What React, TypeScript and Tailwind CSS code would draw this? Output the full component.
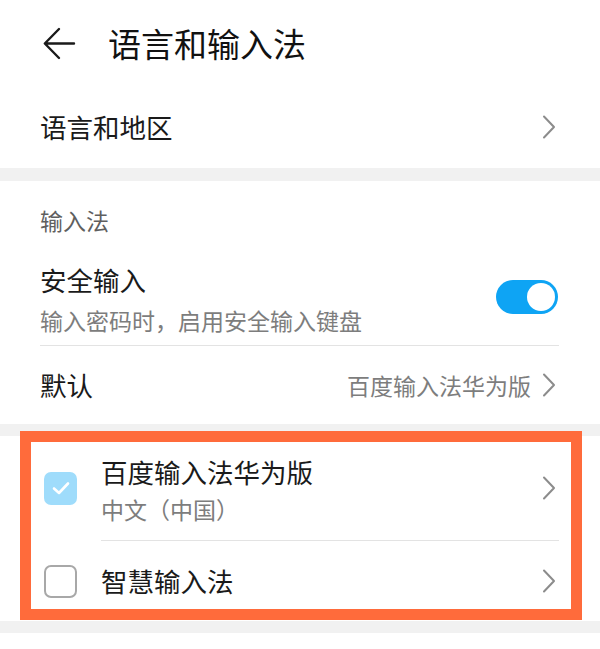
import React from "react";

const Chevron = () => (
  <svg width="14" height="24" viewBox="0 0 14 24" fill="none" className="shrink-0">
    <path d="M2 1.5 L12 12 L2 22.5" stroke="#8c8c8c" strokeWidth="2" strokeLinecap="round" strokeLinejoin="round" />
  </svg>
);

export default function App() {
  const font = { fontFamily: '"Noto Sans CJK SC", "Noto Sans", sans-serif' };
  return (
    <div className="relative w-[600px] h-[649px] bg-white overflow-hidden" style={font}>
      {/* Header */}
      <div className="h-[86px] flex items-center pl-[43px]">
        <svg width="33" height="33" viewBox="0 0 33 33" fill="none" className="shrink-0">
          <path d="M31 16.5 H2.5 M16 2 L1.8 16.5 L16 31" stroke="#1a1a1a" strokeWidth="2.4" strokeLinecap="round" strokeLinejoin="round" />
        </svg>
        <div className="ml-[32px] text-[33px] leading-[40px] font-normal text-[#111111]">语言和输入法</div>
      </div>

      {/* 语言和地区 */}
      <div className="h-[82px] flex items-center justify-between pl-[40px] pr-[44px]">
        <div className="text-[26.5px] leading-[34px] text-[#1a1a1a]">语言和地区</div>
        <Chevron />
      </div>

      <div className="h-[13px] bg-[#f1f1f1]" />

      {/* 输入法 section */}
      <div className="h-[78px] flex items-center pl-[40px]">
        <div className="text-[23px] leading-[30px] text-[#5f5f5f]">输入法</div>
      </div>

      <div className="h-[86px] flex items-start justify-between pl-[40px] pr-[42px]">
        <div className="pt-[4px] flex flex-col">
          <div className="text-[26.5px] leading-[34px] text-[#1a1a1a]">安全输入</div>
          <div className="mt-[8px] text-[23px] leading-[30px] text-[#7d7d7d]">输入密码时，启用安全输入键盘</div>
        </div>
        <div className="mt-[21px] w-[62px] h-[34px] rounded-full bg-[#0ea4f4] flex items-center justify-end pr-[3px]">
          <div className="w-[28px] h-[28px] rounded-full bg-white" />
        </div>
      </div>

      <div className="h-px bg-[#e3e3e3] ml-[40px] mr-[41px]" />

      <div className="h-[78px] flex items-center justify-between pl-[40px] pr-[44px]">
        <div className="text-[26.5px] leading-[34px] text-[#1a1a1a]">默认</div>
        <div className="flex items-center gap-[11px]">
          <div className="text-[23px] leading-[30px] text-[#7d7d7d]">百度输入法华为版</div>
          <Chevron />
        </div>
      </div>

      <div className="h-[12px] bg-[#f1f1f1]" />

      {/* Input method list */}
      <div className="h-[104px] flex items-center pl-[44px] pr-[44px]">
        <div className="w-[33px] h-[33px] rounded-[7px] bg-[#9fdcfb] flex items-center justify-center shrink-0">
          <svg width="20" height="16" viewBox="0 0 20 16" fill="none">
            <path d="M3 8.5 L8 13 L17 3.5" stroke="white" strokeWidth="2.6" strokeLinecap="round" strokeLinejoin="round" />
          </svg>
        </div>
        <div className="ml-[24px] flex-1 flex flex-col pt-[2px]">
          <div className="text-[26.5px] leading-[34px] text-[#1a1a1a]">百度输入法华为版</div>
          <div className="mt-[5px] text-[23px] leading-[30px] text-[#7d7d7d]">中文（中国）</div>
        </div>
        <Chevron />
      </div>

      <div className="h-px bg-[#e3e3e3] ml-[101px] mr-[41px]" />

      <div className="h-[80px] flex items-center pl-[44px] pr-[44px]">
        <div className="w-[33px] h-[33px] rounded-[7px] border-2 border-[#a8a8a8] bg-white shrink-0" />
        <div className="ml-[24px] flex-1 text-[26.5px] leading-[34px] text-[#1a1a1a]">智慧输入法</div>
        <Chevron />
      </div>

      <div className="h-[12px] bg-[#f1f1f1]" />

      {/* Annotation highlight */}
      <div className="absolute left-[20px] top-[431px] w-[562px] h-[189px] border-[11px] border-[#ff6b3b] pointer-events-none" />
    </div>
  );
}
